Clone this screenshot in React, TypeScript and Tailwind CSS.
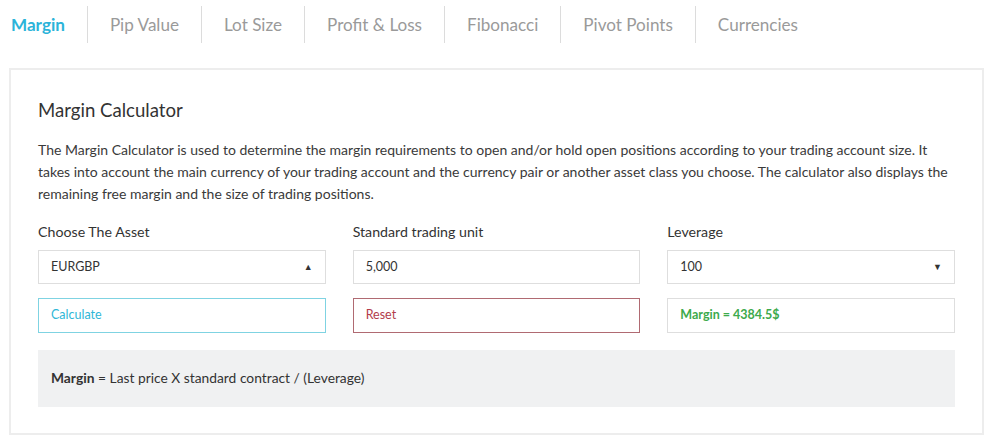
import { useState } from 'react';

const tabs = ['Margin', 'Pip Value', 'Lot Size', 'Profit & Loss', 'Fibonacci', 'Pivot Points', 'Currencies'];

export default function App() {
  const [active, setActive] = useState('Margin');

  return (
    <div className="h-[444px] w-full overflow-hidden bg-white font-['Lato',sans-serif] text-[#333]">
      {/* Tabs */}
      <nav className="flex pt-[6px]">
        {tabs.map((tab, i) => (
          <button
            key={tab}
            onClick={() => setActive(tab)}
            className={
              'flex h-[37px] items-center text-[17.1px] ' +
              (i === 0 ? 'pl-[11px] pr-[22px] ' : 'border-l border-[#dcdcdc] px-[22px] ') +
              (active === tab ? 'font-bold text-[#2bb3d9]' : 'text-[#9a9a9a]')
            }
          >
            {tab}
          </button>
        ))}
      </nav>

      {/* Card */}
      <div className="ml-[9px] mt-[25px] w-[975px] border-2 border-[#ededed] px-[27px] pb-[26px] pt-[28px]">
        <h1 className="text-[18.6px] leading-[24px] text-[#333]">Margin Calculator</h1>
        <p className="mt-[17px] text-[14px] leading-[22px] text-[#3a3a3a]">
          The Margin Calculator is used to determine the margin requirements to open and/or hold open positions
          according to your trading account size. It takes into account the main currency of your trading account and
          the currency pair or another asset class you choose. The calculator also displays the remaining free margin
          and the size of trading positions.
        </p>

        <div className="mt-[17px] grid grid-cols-3 gap-x-[27px]">
          <div>
            <label className="block text-[14.2px] leading-[20px]">Choose The Asset</label>
            <div className="mt-[8px] flex h-[34px] items-center justify-between border border-[#dedede] pl-[12px] pr-[12px] text-[12.5px]">
              <span>EURGBP</span>
              <span className="text-[9px] text-[#333]">▲</span>
            </div>
          </div>
          <div>
            <label className="block text-[14.2px] leading-[20px]">Standard trading unit</label>
            <div className="mt-[8px] flex h-[34px] items-center border border-[#dedede] pl-[12px] text-[12.5px]">
              5,000
            </div>
          </div>
          <div>
            <label className="block text-[14.2px] leading-[20px]">Leverage</label>
            <div className="mt-[8px] flex h-[34px] items-center justify-between border border-[#dedede] pl-[12px] pr-[12px] text-[12.5px]">
              <span>100</span>
              <span className="text-[9px] text-[#333]">▼</span>
            </div>
          </div>

          <button className="mt-[14px] flex h-[35px] items-center border border-[#7fd3e2] pl-[12px] text-[12.5px] text-[#2fb7d7]">
            Calculate
          </button>
          <button className="mt-[14px] flex h-[35px] items-center border border-[#b06a72] pl-[12px] text-[12.5px] text-[#b23c4a]">
            Reset
          </button>
          <div className="mt-[14px] flex h-[35px] items-center border border-[#dedede] pl-[12px] text-[12.5px] font-bold text-[#3daa4c]">
            Margin = 4384.5$
          </div>
        </div>

        <div className="mt-[17px] flex h-[57px] items-center bg-[#f0f1f2] pl-[13px] text-[13.8px]">
          <span>
            <b>Margin</b> = Last price X standard contract / (Leverage)
          </span>
        </div>
      </div>
    </div>
  );
}
